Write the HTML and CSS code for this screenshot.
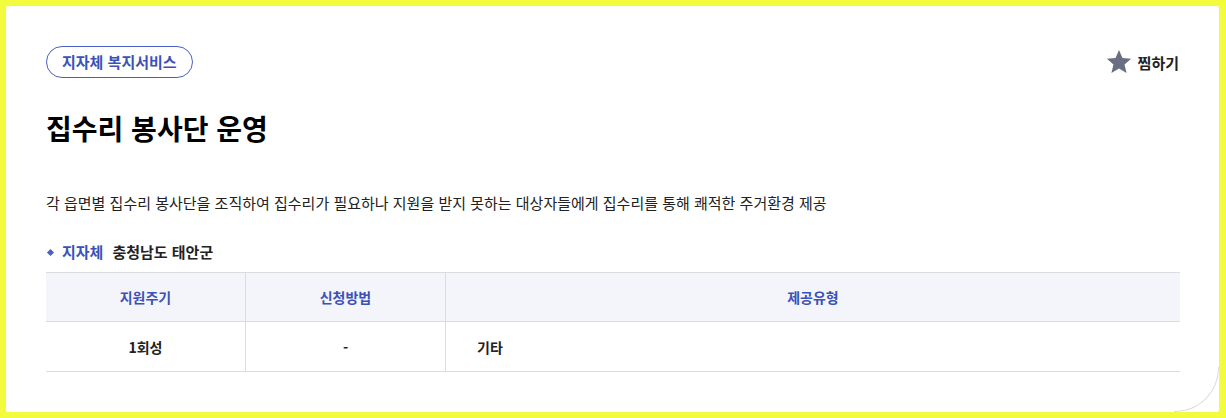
FILE: index.html
```html
<!DOCTYPE html>
<html lang="ko">
<head>
    <meta charset="UTF-8">
    <meta name="viewport" content="width=device-width, initial-scale=1.0">
    <title>집수리 봉사단 운영</title>
    <link rel="stylesheet" href="styles.css">
</head>
<body>
    <div class="card">
        <div class="top-row">
            <span class="tag">지자체 복지서비스</span>
            <button class="bookmark" type="button">
                <svg width="26" height="26" viewBox="0 0 24 24" aria-hidden="true">
                    <path d="M12 1l3.2 7.4 8 .7-6.1 5.3 1.9 7.8L12 18.1l-7 4.1 1.9-7.8L.8 9.1l8-.7z" fill="#6b6d82"/>
                </svg>
                찜하기
            </button>
        </div>

        <h1 class="title">집수리 봉사단 운영</h1>

        <p class="description">
            각 읍면별 집수리 봉사단을 조직하여 집수리가 필요하나 지원을 받지 못하는 대상자들에게 집수리를 통해 쾌적한 주거환경 제공
        </p>

        <div class="region">
            <span class="region-label">지자체</span>
            <span class="region-value">충청남도 태안군</span>
        </div>

        <table class="info-table">
            <thead>
                <tr>
                    <th class="col-small">지원주기</th>
                    <th class="col-small">신청방법</th>
                    <th>제공유형</th>
                </tr>
            </thead>
            <tbody>
                <tr>
                    <td class="center">1회성</td>
                    <td class="center">-</td>
                    <td class="left">기타</td>
                </tr>
            </tbody>
        </table>
    </div>
</body>
</html>
```

FILE: styles.css
```css
html, body {
    height: 100%;
}

body {
    margin: 0;
    padding: 6px 7px 6px 6px;
    box-sizing: border-box;
    background: #f2fb3c;
    font-family: "Noto Sans CJK KR", "Noto Sans", sans-serif;
    color: #111;
}

.card {
    position: relative;
    height: 100%;
    box-sizing: border-box;
    background: #fff;
    border-radius: 2px;
    padding: 40px 39px 0 40px;
}

/* faint rounded corner line at the bottom right */
.card::after {
    content: "";
    position: absolute;
    right: 0;
    bottom: 0;
    width: 44px;
    height: 44px;
    border-right: 1px solid #dcdcdc;
    border-bottom: 1px solid #dcdcdc;
    border-bottom-right-radius: 44px;
}

.top-row {
    display: flex;
    justify-content: space-between;
    align-items: center;
}

.tag {
    display: inline-block;
    height: 32px;
    line-height: 30px;
    box-sizing: border-box;
    padding: 0 15px;
    border: 1px solid #4b5fc4;
    border-radius: 16px;
    color: #3c51b8;
    font-size: 15px;
    font-weight: 700;
}

.bookmark {
    display: flex;
    align-items: center;
    gap: 6px;
    padding: 0;
    border: none;
    background: none;
    font-family: inherit;
    font-size: 15px;
    font-weight: 700;
    color: #222;
    margin-right: 1px;
}

.title {
    margin: 30px 0 0;
    font-size: 28px;
    font-weight: 700;
    line-height: 40px;
    color: #000;
}

.description {
    margin: 43px 0 0;
    font-size: 15px;
    line-height: 24px;
    color: #222;
}

.region {
    display: flex;
    align-items: center;
    margin-top: 26px;
    font-size: 15px;
    font-weight: 700;
    line-height: 22px;
}

.region-label {
    position: relative;
    padding-left: 16px;
    color: #3c51b8;
    margin-right: 9px;
}

.region-label::before {
    content: "";
    position: absolute;
    left: 2px;
    top: 9px;
    width: 5px;
    height: 5px;
    background: #4b5fc4;
    transform: rotate(45deg);
}

.region-value {
    color: #222;
}

.info-table {
    width: 100%;
    margin-top: 9px;
    border-collapse: collapse;
    table-layout: fixed;
    border-top: 1px solid #dcdcdc;
    font-size: 14px;
}

.info-table th,
.info-table td {
    padding: 0;
    border-bottom: 1px solid #dcdcdc;
    border-left: 1px solid #dcdcdc;
}

.info-table th {
    height: 48px;
    background: #f4f5fa;
    color: #3c51b8;
    font-weight: 700;
}

.info-table td {
    height: 49px;
    font-weight: 700;
    color: #222;
}

.info-table th:first-child,
.info-table td:first-child {
    border-left: none;
}

.col-small {
    width: 199px;
}

.info-table .center {
    text-align: center;
}

.info-table .left {
    text-align: left;
    padding-left: 31px;
}
```
